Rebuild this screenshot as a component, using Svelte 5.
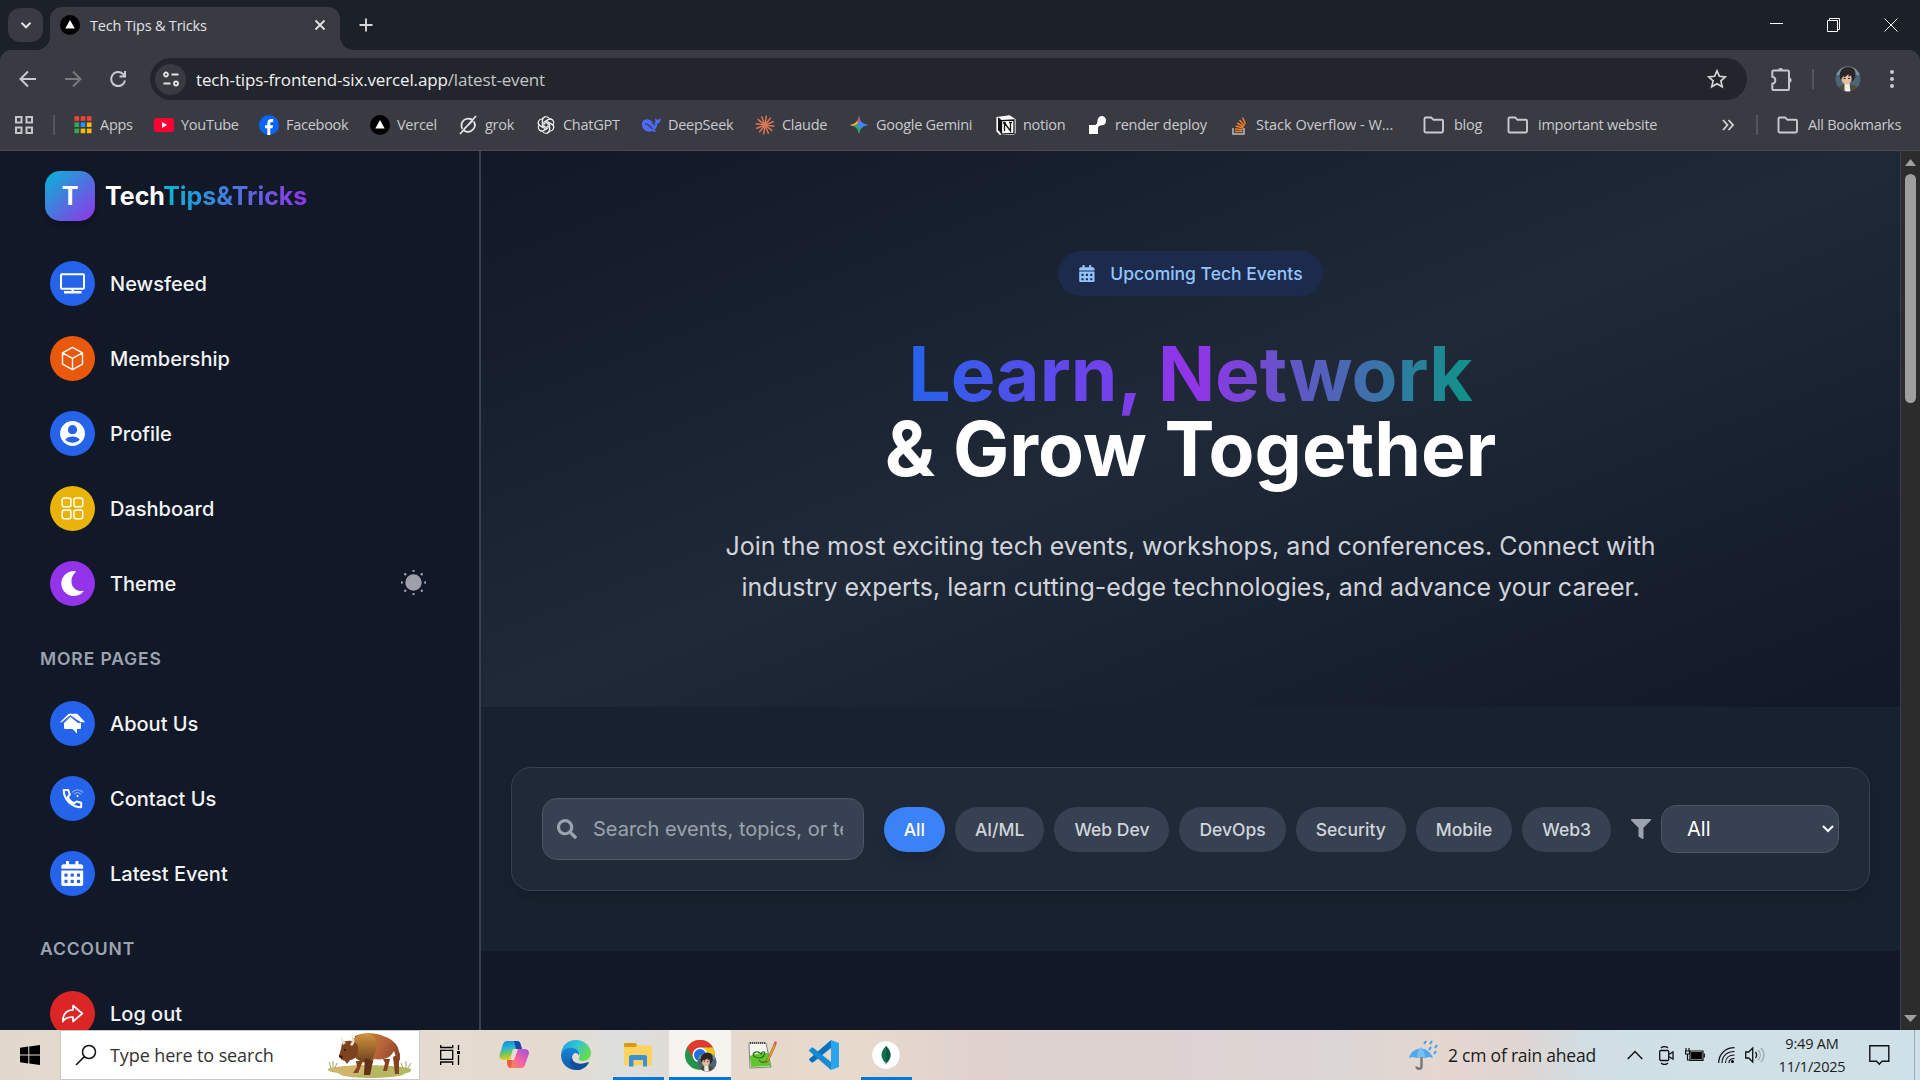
<script>
  const bookmarks = [
    { icon: 'apps', label: 'Apps', w: 81 },
    { icon: 'youtube', label: 'YouTube', w: 105 },
    { icon: 'facebook', label: 'Facebook', w: 111 },
    { icon: 'vercel', label: 'Vercel', w: 88 },
    { icon: 'grok', label: 'grok', w: 78 },
    { icon: 'chatgpt', label: 'ChatGPT', w: 105 },
    { icon: 'deepseek', label: 'DeepSeek', w: 114 },
    { icon: 'claude', label: 'Claude', w: 94 },
    { icon: 'gemini', label: 'Google Gemini', w: 147 },
    { icon: 'notion', label: 'notion', w: 92 },
    { icon: 'render', label: 'render deploy', w: 141 },
    { icon: 'stack', label: 'Stack Overflow - W...', w: 194 },
    { icon: 'folder', label: 'blog', w: 84 },
    { icon: 'folder', label: 'important website', w: 214 }
  ];
  const mainNav = [
    { icon: 'monitor', label: 'Newsfeed', tone: 'blue' },
    { icon: 'box', label: 'Membership', tone: 'orange' },
    { icon: 'user', label: 'Profile', tone: 'blue' },
    { icon: 'grid', label: 'Dashboard', tone: 'yellow' },
    { icon: 'moon', label: 'Theme', tone: 'purple' }
  ];
  const moreNav = [
    { icon: 'home', label: 'About Us', tone: 'blue' },
    { icon: 'phone', label: 'Contact Us', tone: 'blue' },
    { icon: 'calendar', label: 'Latest Event', tone: 'blue' }
  ];
  const accountNav = [{ icon: 'logout', label: 'Log out', tone: 'red' }];
  const categories = ['All', 'AI/ML', 'Web Dev', 'DevOps', 'Security', 'Mobile', 'Web3'];
  const rays = Array.from({ length: 12 }, (_, i) => i * 30);
  const petals = [0, 60, 120, 180, 240, 300];
  const appColors = ['#f44336', '#f44336', '#f44336', '#34a853', '#2196f3', '#fbbc04', '#34a853', '#fbbc04', '#fbbc04'];
  const sunDots = Array.from({ length: 8 }, (_, i) => [12.5 + 11.7 * Math.cos((i * Math.PI) / 4), 12.5 + 11.7 * Math.sin((i * Math.PI) / 4)]);
</script>

{#snippet calendar(size)}
  <svg width={size * 0.9} height={size} viewBox="0 0 448 512" fill="currentColor"><path fill-rule="evenodd" d="M0 464c0 26.500 21.500 48 48 48h352c26.500 0 48-21.500 48-48V192H0zM76 256h40a12 12 0 0 1 12 12v40a12 12 0 0 1-12 12h-40a12 12 0 0 1-12-12v-40a12 12 0 0 1 12-12zM204 256h40a12 12 0 0 1 12 12v40a12 12 0 0 1-12 12h-40a12 12 0 0 1-12-12v-40a12 12 0 0 1 12-12zM332 256h40a12 12 0 0 1 12 12v40a12 12 0 0 1-12 12h-40a12 12 0 0 1-12-12v-40a12 12 0 0 1 12-12zM76 384h40a12 12 0 0 1 12 12v40a12 12 0 0 1-12 12h-40a12 12 0 0 1-12-12v-40a12 12 0 0 1 12-12zM204 384h40a12 12 0 0 1 12 12v40a12 12 0 0 1-12 12h-40a12 12 0 0 1-12-12v-40a12 12 0 0 1 12-12zM332 384h40a12 12 0 0 1 12 12v40a12 12 0 0 1-12 12h-40a12 12 0 0 1-12-12v-40a12 12 0 0 1 12-12zM400 64h-48V16c0-8.800-7.200-16-16-16h-32c-8.800 0-16 7.200-16 16v48H160V16c0-8.800-7.200-16-16-16h-32c-8.800 0-16 7.200-16 16v48H48C21.500 64 0 85.500 0 112v48h448v-48c0-26.500-21.500-48-48-48z" /></svg>
{/snippet}

{#snippet face(size)}
  <svg width={size} height={size} viewBox="0 0 26 26">
    <defs><clipPath id="face-clip"><circle cx="13" cy="13" r="12.500" /></clipPath></defs>
    <g clip-path="url(#face-clip)">
      <rect width="26" height="26" fill="#4d6570" />
      <path d="M0 0h26v9H0z" fill="#7892a0" />
      <path d="M3 26c0-5 3-8 9-8s10 2 12 8z" fill="#4a4d3a" />
      <path d="M9.500 17h5l1 9h-6z" fill="#f1ede8" />
      <ellipse cx="11.500" cy="12.500" rx="5" ry="6" fill="#e6bda0" />
      <path d="M5.500 14C3 6 7 1 13 1s9 4 7 11l-3 4-.5-7-3 2 0-3-4 3.500-1-1.500z" fill="#2b2528" />
      <path d="M8.500 12.500h2M13 12.500h2" stroke="#33272a" stroke-width="1" />
    </g>
  </svg>
{/snippet}

{#snippet markIcon(name)}
  <svg width="20" height="20" viewBox="0 0 20 20" fill="none">
    {#if name === 'apps'}
      {#each appColors as c, i}<rect x={1.500 + (i % 3) * 6.2} y={1.200 + Math.floor(i / 3) * 6.2} width="4.600" height="4.600" fill={c} />{/each}
    {:else if name === 'youtube'}
      <rect y="3" width="20" height="14" rx="3" fill="#ff0033" /><path d="M8 7l5 3-5 3z" fill="#fff" />
    {:else if name === 'facebook'}
      <circle cx="10" cy="10" r="10" fill="#0866ff" /><path d="M8.300 20v-6.800H6v-3h2.300V8.400c0-3 1.500-4.400 4.200-4.400.7 0 1.300.1 1.700.2v2.700h-1.300c-1.200 0-1.600.5-1.600 1.700v1.600H14l-.5 3h-2.200V20z" fill="#fff" />
    {:else if name === 'vercel'}
      <circle cx="10" cy="10" r="10" fill="#000" /><path d="M10 5l4.700 8.500H5.300z" fill="#fff" />
    {:else if name === 'grok'}
      <path d="M15 5.500A6.800 6.800 0 0 0 4.500 14M6 15.500A6.800 6.800 0 0 0 15.800 6.500M2 19L18 1M6.500 13.500L15 5.500" stroke="#e8e8ea" stroke-width="1.700" />
    {:else if name === 'chatgpt'}
      {#each petals as a}<path transform="rotate({a} 10 10)" d="M6.500 9V5.200a3.600 3.600 0 0 1 6.700-1.700M7.900 11.200V7l4.500-2.600a3.500 3.500 0 0 1 4.500 1" stroke="#ededee" stroke-width="1.100" />{/each}
    {:else if name === 'deepseek'}
      <path d="M1 8c1-4 6-5 10-1.500 1.500 1.300 3 2.200 3.500.8L14 3c1 1.500 2 2 3 1.500 1.200.1 2-.5 3-1-.2 3-1.500 4.500-3.500 5-.3 3-1.500 5-3 6.300l2 1.700c-2 .7-3.500.2-4.500-.5C6.500 18.500 0 14.500 1 8z" fill="#4d6bfe" /><path d="M4 9c4-1 6 5 8 4.500M11 8.500c2-1 3 1.200 2 2" stroke="#393a42" stroke-width="1.200" />
    {:else if name === 'claude'}
      {#each rays as a}<path transform="rotate({a + 8} 10 10)" d="M10 10V.6" stroke="#d97757" stroke-width="1.500" />{/each}
    {:else if name === 'gemini'}
      <path d="M10 1c.8 5.500 3.500 8.200 9 9-5.500.8-8.200 3.500-9 9-.8-5.500-3.500-8.200-9-9 5.500-.8 8.200-3.500 9-9z" fill="#4285f4" />
      <path d="M10 1c.8 5.500 3.500 8.200 9 9h-7L8 7z" fill="#4b83ec" /><path d="M10 1C9.200 6.500 6.500 9.200 1 10h6l4-4z" fill="#eb4b3d" /><path d="M1 10c3.500-.5 5.800-1.900 7.200-4.200L10 10l-4 1.500z" fill="#f2bc27" /><path d="M4 10.700c3.600 1.300 5.400 4.100 6 8.300.5-3.500 1.800-5.900 4-7.300L8 9z" fill="#35aa55" /><path d="M9 7l10 3c-4 .5-6.500 2-7.800 4.500L8 9z" fill="#4285f4" />
    {:else if name === 'notion'}
      <path d="M1 2.500L13.500.8 19 4.500V18l-1 1-13.500 1L1 16z" fill="#fff" stroke="#fff" stroke-width="1.200" /><path d="M2 3l3.500 2.800V19L2 15z" fill="#111" /><path d="M5.500 5.700L18 5v13.300l-12.500.8zM2 3l3.500 2.700M8.500 16V8l6 8V7.500M7 8h3M13 7.500h3" stroke="#111" stroke-width="1.300" />
    {:else if name === 'render'}
      <path d="M1 10h5c3 0 3.200-1.500 3.500-4.500C9.800 3 11.500 1 14 1a4.700 4.700 0 0 1 0 9.300c-2.500.2-4 1-4 3V19H1z" fill="#fff" />
    {:else if name === 'stack'}
      <path d="M4 13v6h11v-6" stroke="#bcbbbb" stroke-width="1.500" /><path d="M6 16.500h7.500M6 14l7.500.8M6.800 11l7.200 2M8.200 8l6.500 3.800M10.500 5l5 5.700M13.500 2.500l3 6.500" stroke="#f48024" stroke-width="1.500" />
    {/if}
  </svg>
{/snippet}

{#snippet folder()}
  <svg class="folder" width="22" height="20" viewBox="0 0 22 20" fill="none" stroke="#c9cacf" stroke-width="1.900"><path d="M1.500 3.700c0-.7.500-1.200 1.200-1.200h5.500l2.300 2.300h8.300c.7 0 1.200.5 1.200 1.200v10.300c0 .7-.5 1.200-1.200 1.200H2.700c-.7 0-1.200-.5-1.200-1.200z" /></svg>
{/snippet}

{#snippet navIcon(name)}
  {#if name === 'calendar'}
    {@render calendar(25)}
  {:else}
    <svg width="45" height="45" viewBox="0 0 45 45" fill="none" stroke="#fff" stroke-width="1.500" stroke-linejoin="round">
      {#if name === 'monitor'}
        <rect x="11" y="13.200" width="23" height="14.600" rx="1" stroke-width="2" /><path d="M22.500 28v3M14 31.200h17.500" stroke-width="2.400" />
      {:else if name === 'box'}
        <path d="M22.500 11.300l10 5.500v11.300l-10 5.600-10-5.600V16.800zM12.500 16.800l10 5.500 10-5.500M22.500 22.300v11.400" stroke-width="1.400" />
      {:else if name === 'user'}
        <circle cx="22.500" cy="22.500" r="12.400" fill="#fff" stroke="none" /><circle cx="22.500" cy="18.700" r="4.600" fill="#2563eb" stroke="none" /><path d="M15.300 28.500c3-4 11.400-4 14.400 0-3 4.200-11.400 4.200-14.400 0z" fill="#2563eb" stroke="none" />
      {:else if name === 'grid'}
        <rect x="12.200" y="12" width="8.700" height="8.700" rx="2" /><rect x="24" y="12" width="8.700" height="8.700" rx="2" /><rect x="12.200" y="24" width="8.700" height="8.700" rx="2" /><rect x="24" y="24" width="8.700" height="8.700" rx="2" />
      {:else if name === 'moon'}
        <path d="M25.500 10.200A12.500 12.500 0 1 0 33.500 30.500c.3-.6-.2-.9-.8-.7-10 1.800-15.700-10.600-7-18.700.5-.5.300-.9-.2-.9z" fill="#fff" stroke="none" />
      {:else if name === 'home'}
        <path d="M10 21.200l8.700-8.500h8.500l8 8.500h-4.500l-9.800-6.500-8.500 6.500z" fill="#fff" stroke="none" /><path d="M14 22l6.500-6.300L28 22h3v4.500c0 1-.5 1.500-1.500 1.500H27v4.500L22.500 28h-7c-1 0-1.500-.5-1.500-1.500z" fill="#fff" stroke="none" />
        <path d="M11.500 21.800l8.800-7.300 9 7.300" stroke="#2563eb" stroke-width="1" />
      {:else if name === 'phone'}
        <path d="M13.700 14c0 9.500 8 17.300 17.500 17.300v-4.500l-4.700-1.400-2.500 2.100c-2.700-1.300-5-3.600-6.300-6.300l2.100-2.500L18.300 14z" stroke-width="2" /><path d="M22 16.500c3-3.500 8-3.500 11 0M24.300 18.300c2-2 4.500-2 6.500 0" opacity=".45" stroke-width="1.300" /><circle cx="27.500" cy="20" r="1" fill="#fff" stroke="none" />
      {:else if name === 'logout'}
        <path d="M23 14.500l9.300 8-9.300 8v-4.300c-5-.3-8 .8-10.200 4.300 0-7.500 4-11.300 10.200-11.600z" stroke-width="1.700" />
      {/if}
    </svg>
  {/if}
{/snippet}

{#snippet navList(items)}
  <ul class="nav">
    {#each items as item}
      <li>
        <span class="bubble {item.tone}">{@render navIcon(item.icon)}</span>
        <span class="nav-label">{item.label}</span>
        {#if item.icon === 'moon'}
          <svg class="sun" width="25" height="25" viewBox="0 0 25 25" fill="#9f9fa9"><circle cx="12.500" cy="12.500" r="8.200" />{#each sunDots as [x, y]}<circle cx={x} cy={y} r="1.200" />{/each}</svg>
        {/if}
      </li>
    {/each}
  </ul>
{/snippet}

<div class="window">
  <header class="tabs">
    <button class="tab-menu" aria-label="Search tabs"><svg width="14" height="14" viewBox="0 0 14 14" fill="none" stroke="#dfe0e4" stroke-width="2"><path d="M2.500 4.800L7 9.300l4.500-4.500" /></svg></button>
    <div class="tab">
      {@render markIcon('vercel')}
      <span class="tab-title">Tech Tips &amp; Tricks</span>
      <svg width="12" height="12" viewBox="0 0 12 12" stroke="#e3e3e6" stroke-width="1.800"><path d="M1.500 1.500l9 9M10.500 1.500l-9 9" /></svg>
    </div>
    <svg class="plus" width="14" height="14" viewBox="0 0 14 14" stroke="#d6d7da" stroke-width="1.900"><path d="M7 .5v13M.5 7h13" /></svg>
    <div class="controls">
      <svg width="14" height="14" viewBox="0 0 14 14" stroke="#fff"><path d="M0 5.500h13" /></svg>
      <svg width="14" height="14" viewBox="0 0 14 14" fill="none" stroke="#fff"><path d="M.5 2.500h10v11H.5zM2.500 2.500V.5h10v11h-2" /></svg>
      <svg width="14" height="14" viewBox="0 0 14 14" stroke="#fff"><path d="M.5 .5l13 13M13.500 .5l-13 13" /></svg>
    </div>
  </header>

  <div class="chrome">
    <div class="toolbar">
      <svg class="tool" width="20" height="20" viewBox="0 0 20 20" fill="none" stroke="#c8c9d4" stroke-width="2"><path d="M18 10H3M10 2.500L2.500 10l7.500 7.500" /></svg>
      <svg class="tool" width="20" height="20" viewBox="0 0 20 20" fill="none" stroke="#797a80" stroke-width="2"><path d="M2 10h15M10 2.500l7.500 7.500-7.500 7.500" /></svg>
      <svg class="tool" width="20" height="20" viewBox="0 0 20 20" fill="none" stroke="#c8c9d4" stroke-width="2"><path d="M17 11.500A7 7 0 1 1 15 5l2 2M17 2v5.500h-5.500" /></svg>
      <div class="omnibox">
        <span class="site"><svg width="18" height="18" viewBox="0 0 18 18" fill="none" stroke="#e3e3e6" stroke-width="1.800"><circle cx="4" cy="4.500" r="2" /><path d="M9.500 4.500h7M1.500 13.500h7" /><circle cx="14" cy="13.500" r="2" /></svg></span>
        <span class="url">tech-tips-frontend-six.vercel.app<span>/latest-event</span></span>
        <svg width="20" height="20" viewBox="0 0 20 20" fill="none" stroke="#d5d6da" stroke-width="1.700"><path d="M10 1.800l2.400 5.500 6 .6-4.500 4 1.300 5.900-5.200-3.100-5.200 3.100 1.300-5.900-4.500-4 6-.6z" /></svg>
      </div>
      <svg class="puzzle" width="23" height="26" viewBox="0 0 23 26" fill="none" stroke="#c4c5d2" stroke-width="2"><path d="M3.500 4.500h14.300c.7 0 1.200.5 1.200 1.200v17c0 .7-.5 1.200-1.200 1.200H3.500c-.7 0-1.200-.5-1.200-1.200v-5c4-.6 4-6.400 0-7v-5c0-.7.5-1.200 1.200-1.200z" /><path d="M8 4.500a2.600 2.600 0 0 1 5.200 0zM19 11.500a2.600 2.600 0 0 1 0 5.200z" fill="#c4c5d2" stroke="none" /></svg>
      <i class="divider"></i>
      <span class="avatar">{@render face(26)}</span>
      <svg width="6" height="18" viewBox="0 0 6 18" fill="#c8c9d4"><circle cx="3" cy="2" r="2" /><circle cx="3" cy="9" r="2" /><circle cx="3" cy="16" r="2" /></svg>
    </div>
    <nav class="bookmarks">
      <svg class="tab-groups" width="18" height="18" viewBox="0 0 18 18" fill="none" stroke="#c5c6ca" stroke-width="2"><path d="M1 1h5.500v5.500H1zM11.500 1H17v5.500h-5.500zM1 11.500h5.500V17H1zM11.500 11.500H17V17h-5.500z" /></svg>
      <i class="divider"></i>
      <div class="marks">
        {#each bookmarks as b}
          <span class="mark {b.icon}" class:is-folder={b.icon === 'folder'} style="width: {b.w}px">
            {#if b.icon === 'folder'}{@render folder()}{:else}{@render markIcon(b.icon)}{/if}
            <span class="mark-label">{b.label}</span>
          </span>
        {/each}
      </div>
      <svg class="more" width="14" height="14" viewBox="0 0 14 14" fill="none" stroke="#d3d4d8" stroke-width="1.800"><path d="M2 2l4.500 5L2 12M7.500 2L12 7l-4.500 5" /></svg>
      <i class="divider"></i>
      <span class="mark is-folder all">{@render folder()}<span class="mark-label">All Bookmarks</span></span>
    </nav>
  </div>

  <div class="page">
    <aside>
      <div class="brand"><span class="logo">T</span><span class="brand-name">Tech<span>Tips&amp;Tricks</span></span></div>
      {@render navList(mainNav)}
      <h4>MORE PAGES</h4>
      {@render navList(moreNav)}
      <h4>ACCOUNT</h4>
      {@render navList(accountNav)}
    </aside>
    <main>
      <section class="hero">
        <div class="badge">{@render calendar(17.5)}<span>Upcoming Tech Events</span></div>
        <h1><span>Learn, Network</span><br />&amp; Grow Together</h1>
        <p>Join the most exciting tech events, workshops, and conferences. Connect with industry experts, learn cutting-edge technologies, and advance your career.</p>
      </section>
      <section class="filters">
        <div class="card">
          <div class="search">
            <svg width="20" height="20" viewBox="0 0 512 512" fill="#9ca3af"><path d="M505 442.700L405.300 343c-4.500-4.500-10.600-7-17-7H372c27.600-35.300 44-79.700 44-128C416 93.100 322.900 0 208 0S0 93.100 0 208s93.100 208 208 208c48.300 0 92.700-16.400 128-44v16.300c0 6.400 2.500 12.500 7 17l99.700 99.700c9.400 9.400 24.600 9.400 33.900 0l28.300-28.300c9.400-9.400 9.400-24.600.1-34zM208 336c-70.700 0-128-57.200-128-128 0-70.700 57.200-128 128-128 70.700 0 128 57.200 128 128 0 70.700-57.200 128-128 128z" /></svg>
            <span>Search events, topics, or technologies...</span>
          </div>
          <div class="chips">
            {#each categories as c, i}<button class="chip" class:active={i === 0}>{c}</button>{/each}
          </div>
          <div class="select-wrap">
            <svg width="20" height="20" viewBox="0 0 512 512" fill="#9ca3af"><path d="M487.976 0H24.028C2.710 0-8.047 25.866 7.058 40.971L192 225.941V432c0 7.831 3.821 15.170 10.237 19.662l80 55.980C298.020 518.690 320 507.493 320 487.980V225.941l184.947-184.970C520.021 25.896 509.338 0 487.976 0z" /></svg>
            <div class="select"><span>All</span><svg width="12" height="8" viewBox="0 0 12 8" fill="none" stroke="#fff" stroke-width="2"><path d="M1 1l5 5 5-5" /></svg></div>
          </div>
        </div>
      </section>
    </main>
    <div class="scrollbar">
      <svg width="11" height="7" viewBox="0 0 11 7" fill="#9f9f9f"><path d="M5.500 0L11 7H0z" /></svg>
      <i></i>
      <svg class="down" width="13" height="7" viewBox="0 0 13 7" fill="#9f9f9f"><path d="M6.500 7L0 0h13z" /></svg>
    </div>
  </div>

  <footer class="taskbar">
    <div class="start"><svg width="20" height="20" viewBox="0 0 20 20"><path d="M0 2.800l8.300-1.200v8H0zM9.300 1.500L20 0v9.600H9.300zM0 10.500h8.300v8L0 17.300zM9.300 10.500H20V20L9.300 18.500z" /></svg></div>
    <div class="win-search">
      <svg width="22" height="22" viewBox="0 0 22 22" fill="none" stroke="#111" stroke-width="1.500"><circle cx="14" cy="8" r="6.500" /><path d="M9.400 12.600L1 21" /></svg>
      <span>Type here to search</span>
      <svg class="bison" width="86" height="48" viewBox="0 0 86 48">
        <defs>
          <linearGradient id="hide" x1="0" y1="0" x2="1" y2=".5"><stop offset="0" stop-color="#8c5026" /><stop offset=".35" stop-color="#b87730" /><stop offset=".6" stop-color="#b9653a" /><stop offset="1" stop-color="#8a4324" /></linearGradient>
          <linearGradient id="hump" x1="0" y1="0" x2="0" y2="1"><stop offset="0" stop-color="#d0933f" /><stop offset="1" stop-color="#70401d" /></linearGradient>
        </defs>
        <path d="M1 38C15 33 70 33 84 38c2 4-8 4-8 6-15 4-50 4-62 0 0-3-14-2-13-6z" fill="#b6b663" />
        <path d="M1 38c14-4 35-4 45-3L32 44c-8 1-15 1-18-1 0-2-12-2-13-5z" fill="#cfb66c" />
        <path d="M4 37l-2-6M6 37V30M8 37l2-5M76 37l-2-5M79 37v-7M81 37l3-5" stroke="#a4a35a" />
        <path d="M56 28l2 4-2 8h4l3-12zM66 26l1 8 1 9h4V32l1-10zM29 30l1 6-4 6h5l5-12z" fill="#854322" />
        <path d="M28 5C38 1 50 2 56 5c12 4 17 10 17 24h-3l-3-9c-5 9-13 9-20 8l-2 4-2 12h-6l1-14c-8 0-12-4-12-10z" fill="url(#hide)" />
        <path d="M26 8C34 1 46 1 49 9c1 8-1 14-4 20-3 4-11 4-17-3z" fill="url(#hump)" />
        <path d="M38 27l8 3-3 14h-6z" fill="#633117" />
        <path d="M15 12c5-4 15-3 16 4 1 8-3 13-8 13l-3 4-2-3-3-1-3-4 2-7z" fill="#7d431f" />
        <path d="M16 14c-2-3-2-6-1-9 0 4 2 5 4 7zM23 14c2-3 3-6 1-11 5 5 4 10 1 12z" fill="#ecdcc0" /><circle cx="18" cy="19" r="1" fill="#28130b" /><path d="M12 24l4 1-1 3-3-2z" fill="#33190e" />
      </svg>
    </div>
    <div class="apps">
      <span class="app taskview"><svg width="20" height="20" viewBox="0 0 20 20" fill="none" stroke="#000" stroke-width="1.300"><path d="M.7 0v2.500h12V0M.7 20v-3h12v3M.7 5.300h12v9H.7zM18.500 0v5M18.500 10v10" /><path d="M17 6h3v3h-3z" fill="#000" stroke="none" /></svg></span>
      <span class="app"><svg width="30" height="30" viewBox="0 0 30 30">
        <defs>
          <linearGradient id="cpa" x1="0" y1="0" x2=".2" y2="1"><stop offset="0" stop-color="#1784d8" /><stop offset=".4" stop-color="#26b5d9" /><stop offset=".7" stop-color="#73c75a" /><stop offset="1" stop-color="#e5ca22" /></linearGradient>
          <linearGradient id="cpb" x1="1" y1="0" x2="0" y2="1"><stop offset="0" stop-color="#a14de0" /><stop offset=".5" stop-color="#ef63a5" /><stop offset="1" stop-color="#ff8d45" /></linearGradient>
        </defs>
        <path d="M8 1h10c2 0 3 1 3.500 3l1.500 5h-6L13 20H5c-3 0-5-2-4.500-5L4 4c1-2 2-3 4-3z" fill="url(#cpa)" />
        <path d="M15 1h3c2 0 3 1 3.500 3l1.500 5h-6z" fill="#174ba8" />
        <path d="M22 28H12c-2 0-3-1-3.500-3L8 20h5l4-11h8c4 0 5.500 2 4.800 5L26 25c-1 2-2 3-4 3z" fill="url(#cpb)" />
        <path d="M14 9h5l-4 11h-4z" fill="#e7ded3" /><path d="M8 20h5l-1 8c-2 0-3-1-3.500-3z" fill="#ee5d40" />
      </svg></span>
      <span class="app"><svg width="30" height="30" viewBox="0 0 30 30">
        <defs>
          <linearGradient id="ega" x1="0" y1="0" x2="1" y2=".5"><stop offset="0" stop-color="#1e9ade" /><stop offset=".5" stop-color="#2ec4d8" /><stop offset="1" stop-color="#66dd4f" /></linearGradient>
          <linearGradient id="egb" x1="0" y1="0" x2="0" y2="1"><stop offset="0" stop-color="#1684d8" /><stop offset="1" stop-color="#0f5aa8" /></linearGradient>
        </defs>
        <path d="M0 14C1 5 7 0 15 0c9 0 15 7 15 13 0 5-4 8-8 8-3 0-5-1-4-3 2-3 0-8-5-9C7 8 2 10 0 14z" fill="url(#ega)" />
        <path d="M0 15c1-5 6-8 11-7 5 0 8 4 7 8-1-4-6-4-7 1-1 7 6 11 12 8l4-1c-3 4-7 6-12 6C6 30 0 23 0 15z" fill="url(#egb)" />
        <path d="M11 17c0 5 6 9 16 5 1 0 1 1 0 2-3 4-7 6-11 6-6-1-9-8-5-13z" fill="#134f99" />
      </svg></span>
      <span class="app run"><svg width="28" height="24" viewBox="0 0 28 24"><path d="M0 1.500C0 .6.600 0 1.500 0H12l2 2.500h12.500c.9 0 1.500.6 1.500 1.500V21c0 .8-.7 1.500-1.500 1.500h-25C.7 22.500 0 21.800 0 21z" fill="#ffd260" /><path d="M0 4V1.500C0 .6.600 0 1.500 0H12l1 2.500L11 4z" fill="#dc9a0d" /><path d="M5 23.500V14c0-1 1-2 2-2h14c1 0 2 1 2 2v9.500h-4V17H9.500v6.500z" fill="#3b91d5" /></svg></span>
      <span class="app current"><span class="chrome-icon">
        <svg width="30" height="30" viewBox="0 0 30 30"><circle cx="15" cy="15" r="15" fill="#22944a" /><path d="M2 7.500A15 15 0 0 1 28 7.500H15L8.500 18.800z" fill="#e23a2d" /><path d="M28 7.500A15 15 0 0 1 15 30l6.500-11.200L15 7.500z" fill="#fcc31e" /><circle cx="15" cy="15" r="7.500" fill="#fff" /><circle cx="15" cy="15" r="6" fill="#1d6fe8" /></svg>
        <span class="profile-dot">{@render face(20)}</span></span></span>
      <span class="app"><svg width="30" height="30" viewBox="0 0 30 30"><path d="M2 3h17l5 24-21 1z" fill="#f8f8f2" stroke="#555" stroke-width=".7" /><path d="M3 16c6-3 12-3 18-3l2.500 13L4 27z" fill="#63c52d" /><path d="M6 15c1-4 6-4 8-1 2-4 5-2 3 1-1 4-8 4-11 0M12 20c2 3 5 3 8 1" fill="none" stroke="#2d6b1e" stroke-width="1.200" /><path d="M3 3h15" stroke="#444" stroke-width="2" stroke-dasharray="1 1" /><path d="M20 20L27 4l2 .8-7.500 16-2 1.700z" fill="#efab25" stroke="#7b541c" stroke-width=".6" /><path d="M26.500 4L28 1l2 1-1 3z" fill="#d56260" /></svg></span>
      <span class="app"><svg width="30" height="30" viewBox="0 0 30 30"><path d="M22 0l8 3v24l-8 3z" fill="#29a5ee" /><path d="M22 0v8L4 22.500H2.700L.4 20.300c-.5-.5-.5-1 0-1.500z" fill="#0d72bd" /><path d="M22 30v-8L4 7.500H2.700L.4 9.700c-.5.5-.5 1 0 1.500z" fill="#178bd2" /></svg></span>
      <span class="app run"><svg width="28" height="28" viewBox="0 0 28 28"><circle cx="14" cy="14" r="13.800" fill="#fff" /><path d="M14 5c6 6 6 12 0 17.500C8 17 8 11 14 5z" fill="#10724d" /><path d="M14 5c6 6 6 12 0 17.500z" fill="#0b5a3f" /><path d="M14 21v2.500" stroke="#8fa89b" /></svg></span>
    </div>
    <div class="tray">
      <svg class="umbrella" width="30" height="30" viewBox="0 0 30 30" fill="none"><path d="M0 18C2 8 18 3 24 18l-4-1-4 1-4-1-4 1-4-1z" fill="#4fa9ed" /><path d="M8 17c0-6 3-9 4-10 3 3 4 7 4 11l-4-1z" fill="#78c1f6" /><path d="M12.500 17v9.500c0 3-5 3-5 0" stroke="#777" stroke-width="2.400" /><path d="M15 4l2-3M21 4l2-3M20 10l2-3M26 8l2-3M25 14l2-3" stroke="#44a0e9" stroke-width="2" /></svg>
      <span class="weather">2 cm of rain ahead</span>
      <svg class="caret" width="16" height="10" viewBox="0 0 16 10" fill="none" stroke="#111" stroke-width="1.500"><path d="M.7 9L8 1.500 15.300 9" /></svg>
      <svg class="cam" width="15" height="19" viewBox="0 0 15 19" fill="none" stroke="#111" stroke-width="1.300"><rect x=".7" y="4.500" width="9" height="10" rx="1" /><path d="M9.700 8.500L14 6v7l-4.300-2.500M2 2c2-1.700 5-1.700 7 0M2 17c2 1.700 5 1.700 7 0" /></svg>
      <svg class="battery" width="20" height="14" viewBox="0 0 20 14" fill="none" stroke="#111" stroke-width="1.200"><path d="M5 3h13v9.500H5z" /><path d="M6.500 4.500h10v6.500h-10z" fill="#000" /><path d="M19.300 5.500v4M1 0v3M4 0v3M.5 3h4v3h-4zM2.500 6v6H5" /></svg>
      <svg class="wifi" width="17" height="16" viewBox="0 0 17 16" fill="none" stroke="#111" stroke-width="1.200"><path d="M.7 16C.7 7 7.500.7 16.500.7M4 16C4 9 9 4.500 16.500 4.500M7.500 16c0-5 3.500-8 9-8M11 16c0-3 2-4.500 5.500-4.500" /><circle cx="14.500" cy="14.500" r="1.500" fill="#000" stroke="none" /></svg>
      <svg class="volume" width="20" height="18" viewBox="0 0 20 18" fill="none" stroke="#111" stroke-width="1.300"><path d="M.7 6h3l4-4v14l-4-4h-3zM10.500 6c1.500 2 1.500 4 0 6" /><path d="M13 4c3 3 3 7 0 10M16 2c4 4 4 10 0 14" stroke="#9aa5a8" /></svg>
      <div class="clock"><span>9:49 AM</span><span>11/1/2025</span></div>
      <svg class="notice" width="21" height="21" viewBox="0 0 21 21" fill="none" stroke="#111" stroke-width="1.400"><path d="M.8.8h19v15.500H13l-2.700 3-2.700-3H.8z" /></svg>
      <i class="peek"></i>
    </div>
  </footer>
</div>

<style>
  :global(body) { margin: 0; background: #111827; overflow: hidden; }
  * { box-sizing: border-box; }
  svg { display: block; flex: none; }
  button { border: 0; padding: 0; font: inherit; color: inherit; }
  .window { width: 1920px; height: 1080px; display: flex; flex-direction: column; overflow: hidden; font-family: "Open Sans", "Noto Sans", sans-serif; }

  .tabs { height: 50px; flex: none; background: #1c2028; display: flex; align-items: center; padding-left: 8px; box-shadow: 0 14px 0 #1c2028; }
  .tab-menu { width: 35px; height: 34px; border-radius: 12px; background: #393a42; display: grid; place-items: center; }
  .tab { position: relative; width: 290px; height: 43px; margin: 7px 0 0 7px; padding: 0 14px 7px 10px; background: #393a42; border-radius: 12px 12px 0 0; display: flex; align-items: center; color: #e3e3e6; }
  .tab::before, .tab::after { content: ""; position: absolute; bottom: 0; width: 13px; height: 13px; }
  .tab::before { left: -13px; background: radial-gradient(circle at 0 0, transparent 12.500px, #393a42 13px); }
  .tab::after { right: -13px; background: radial-gradient(circle at 100% 0, transparent 12.500px, #393a42 13px); }
  .tab-title { flex: 1; margin-left: 10px; font-size: 14.500px; letter-spacing: -0.2px; }
  .plus { margin-left: 19px; }
  .controls { margin-left: auto; display: flex; gap: 43px; padding-right: 22px; }

  .chrome { position: relative; height: 101px; flex: none; background: #393a42; border-radius: 11px 11px 0 0; border-bottom: 1px solid #4a4a4f; }
  .toolbar { height: 58px; display: flex; align-items: center; padding-left: 18px; }
  .tool { margin-right: 25px; }
  .omnibox { width: 1597px; height: 42px; margin-left: -3px; border-radius: 21px; background: #23252c; display: flex; align-items: center; padding: 0 20px 0 5px; }
  .site { width: 31px; height: 31px; border-radius: 50%; background: #393a42; display: grid; place-items: center; }
  .url { flex: 1; margin-left: 10px; font-size: 17px; letter-spacing: -0.15px; color: #f1f1f3; }
  .url span { color: #c4c5c9; }
  .puzzle { margin-left: 23px; }
  .divider { width: 2px; height: 20px; background: #53555d; flex: none; }
  .toolbar .divider { margin-left: 19px; }
  .avatar { margin: 0 28px 0 21px; }
  .bookmarks { height: 36px; display: flex; align-items: center; padding: 0 18px 2px 15px; font-size: 14.500px; letter-spacing: -0.27px; color: #c9cacf; }
  .tab-groups { margin-right: 20px; }
  .marks { width: 1648px; margin-left: 18px; display: flex; }
  .mark { display: flex; align-items: center; gap: 7px; flex: none; white-space: nowrap; }
  .mark-label { padding-bottom: 2px; }
  .mark.stack { letter-spacing: -0.02px; }
  .mark.is-folder { gap: 9px; }
  .more { margin-right: 21px; }
  .all { margin-left: 19px; }

  .page { height: 879px; flex: none; display: flex; background: #111827; font-family: Inter, sans-serif; overflow: hidden; }
  aside { width: 481px; flex: none; border-right: 2px solid #374151; padding: 20px 55px 0 40px; }
  .brand { display: flex; align-items: center; gap: 10px; padding-left: 5px; margin-bottom: 40px; color: #fff; }
  .logo { width: 50px; height: 50px; border-radius: 15px; display: grid; place-items: center; font-size: 25px; font-weight: 700; background: linear-gradient(to bottom right, #06b6d4, #9333ea); box-shadow: 0 4px 7px #0003; }
  .brand-name { font-size: 25px; font-weight: 700; }
  .brand-name span { background: linear-gradient(to right, #06b6d4, #9333ea); background-clip: text; color: transparent; }
  .nav { list-style: none; margin: 0; padding: 0 0 0 10px; display: flex; flex-direction: column; gap: 30px; }
  .nav li { height: 45px; display: flex; align-items: center; gap: 15px; color: #f3f4f6; font-size: 20px; font-weight: 500; }
  .bubble { width: 45px; height: 45px; border-radius: 50%; display: grid; place-items: center; color: #fff; }
  .blue { background: #2563eb; }
  .orange { background: #ea580c; }
  .yellow { background: #eab308; }
  .purple { background: #9333ea; }
  .red { background: #dc2626; }
  .sun { margin-left: auto; margin-right: -2px; margin-top: -2px; }
  h4 { margin: 40px 0 30px; height: 25px; line-height: 25px; font-size: 17.500px; font-weight: 600; letter-spacing: 0.875px; color: #9ca3af; }
  main { width: 1419px; flex: none; }
  .hero { height: 556px; padding-top: 100px; background: linear-gradient(to bottom right, #111827, #1f2937, #111827); display: flex; flex-direction: column; align-items: center; text-align: center; }
  .badge { height: 45px; flex: none; border-radius: 23px; padding: 0 20px 0 21px; display: flex; align-items: center; gap: 15px; background: #1c2a4c; color: #93c5fd; font-size: 17.500px; font-weight: 500; }
  h1 { margin: 40px 0; font-size: 75px; line-height: 75px; font-weight: 700; color: #fff; }
  h1 span { background: linear-gradient(to right, #2563eb, #9333ea, #0d9488); background-clip: text; color: transparent; }
  .hero p { margin: 0; width: 960px; font-size: 25px; line-height: 40.600px; color: #d1d5db; }
  .filters { height: 244px; padding: 60px 30px; background: #18212f; }
  .card { height: 124px; border: 1px solid #374151; border-radius: 20px; background: #1f2937; padding: 0 30px; display: flex; align-items: center; gap: 20px; box-shadow: 0 12px 19px -4px #0000001a, 0 5px 8px -5px #0000001a; }
  .search { flex: 1; min-width: 0; height: 62px; border: 1px solid #4b5563; border-radius: 15px; background: #374151; padding: 0 20px 0 14px; display: flex; align-items: center; gap: 16px; font-size: 20px; color: #9ca3af; }
  .search span { overflow: hidden; white-space: nowrap; line-height: 30px; }
  .chips { display: flex; gap: 10px; }
  .chip { height: 45px; padding: 0 20px; border-radius: 23px; background: #374151; color: #d1d5db; font-size: 17.500px; font-weight: 500; white-space: nowrap; }
  .chip.active { background: #3b82f6; color: #fff; box-shadow: 0 12px 19px -4px #0000001a, 0 5px 8px -5px #0000001a; }
  .select-wrap { display: flex; align-items: center; gap: 10px; }
  .select { width: 178px; height: 48px; border: 1px solid #4b5563; border-radius: 15px; background: #374151; color: #fff; font-size: 20px; display: flex; align-items: center; justify-content: space-between; padding: 0 4px 0 25px; }
  .scrollbar { width: 20px; background: #2c2c2c; border-left: 1px solid #374151; display: flex; flex-direction: column; align-items: center; padding: 8px 0; }
  .scrollbar i { width: 11px; height: 229px; margin-top: 8px; border-radius: 6px; background: #9f9f9f; }
  .scrollbar .down { margin-top: auto; }

  .taskbar { height: 50px; flex: none; display: flex; background: linear-gradient(90deg, #e3d8cc 0, #e5dbd0 24%, #e4dacf 29%, #dcdfde 32.500%, #e5d9cd 37%, #e6dacd 45%, #dfd2cf 51%, #ded3d2 62%, #dcd6d4 70%, #e5d7d0 75%, #e0d5d1 79%, #cfdfe5 83%, #cfe1e8 100%); color: #1b1b1b; }
  .start { width: 60px; display: grid; place-items: center; }
  .win-search { width: 360px; background: #fff; border: 1px solid #c8c8c8; display: flex; align-items: center; padding-left: 14px; color: #333; }
  .win-search span { margin-left: 13px; width: 217px; white-space: nowrap; font-size: 18px; letter-spacing: -0.1px; }
  .apps { display: flex; }
  .app { width: 62px; display: flex; align-items: center; justify-content: center; position: relative; }
  .app.taskview { width: 63px; padding-right: 3px; }
  .app.run::after, .app.current::after { content: ""; position: absolute; left: 6px; right: 5px; bottom: 0; height: 3px; background: #0078d7; }
  .app.current { background: #f6f2ee; }
  .app.current::after { left: 0; right: 0; }
  .chrome-icon { position: relative; }
  .profile-dot { position: absolute; left: 12px; top: 12px; }
  .tray { margin-left: auto; display: flex; align-items: center; }
  .weather { margin-left: 9px; width: 179px; white-space: nowrap; font-size: 17.500px; letter-spacing: -0.22px; }
  .cam { margin-left: 16px; }
  .battery { margin-left: 11px; }
  .wifi { margin-left: 13px; }
  .volume { margin-left: 10px; }
  .clock { width: 80px; margin-left: 7px; display: flex; flex-direction: column; font-size: 14.500px; line-height: 23px; text-align: center; letter-spacing: -0.2px; white-space: nowrap; }
  .notice { margin-left: 17px; }
  .peek { margin-left: 24px; width: 6px; height: 50px; border-left: 1px solid #9eabb0; }
</style>
